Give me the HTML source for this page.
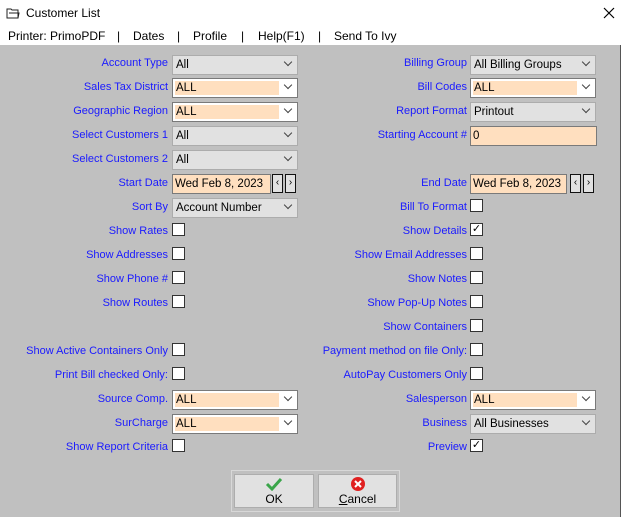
<!DOCTYPE html><html><head><style>
body{margin:0;width:625px;height:517px;overflow:hidden;background:#fff;font-family:"Liberation Sans",Arial,sans-serif;font-size:11px;position:relative}
.title{position:absolute;left:26px;top:6px;font-size:12px;color:#000}
.menu span{position:absolute;top:29px;font-size:12px}
.body{position:absolute;left:0;top:45px;width:620px;height:472px;background:#c0c0c0;border-right:1px solid #555}
.l{position:absolute;color:#1a1aff;text-align:right;width:300px;white-space:nowrap;margin-top:2px}
.c{position:absolute;width:126px;height:20px;box-sizing:border-box;border:1px solid #acacac;background:#e1e1e1;color:#000}
.c span{position:absolute;left:3px;top:3px;font-size:11.5px}
.c.e{background:#fff;border-color:#7a7a7a}
.c.e i{position:absolute;left:2px;top:2px;width:104px;height:14px;background:#ffdfbf}
.c b{position:absolute;right:6px;top:3px;width:5px;height:5px;border-right:1px solid #444;border-bottom:1px solid #444;transform:rotate(45deg)}
.t{position:absolute;width:99px;height:20px;box-sizing:border-box;border:1px solid #7a7a7a;background:#ffdfbf;color:#000;padding:3px 0 0 2px;font-size:11.5px;white-space:nowrap;overflow:hidden}
.ar{position:absolute;width:11px;height:19px;box-sizing:border-box;border:1px solid #111;background:#e1e1e1;font-size:10px;text-align:center;line-height:16px}
.k{position:absolute;width:13px;height:13px;box-sizing:border-box;border:1px solid #333;background:#fff;font-size:11px;line-height:11px;text-align:center}
.btn{position:absolute;top:474px;height:34px;width:80px;box-sizing:border-box;border:1px solid #adadad;background:#e1e1e1;text-align:center;font-size:12px}
</style></head><body>
<svg style="position:absolute;left:6px;top:7px" width="14" height="13"><path d="M1 2h4l1 1h6v8H1z" fill="none" stroke="#222"/><path d="M3 6h10l-1 5" fill="none" stroke="#222"/></svg>
<div class="title">Customer List</div>
<svg style="position:absolute;left:603px;top:7px" width="12" height="12"><path d="M1 1l10 10M11 1L1 11" stroke="#000" stroke-width="1.2"/></svg>
<div class="menu"><span style="left:8px">Printer: PrimoPDF</span><span style="left:117px">|</span><span style="left:133px">Dates</span><span style="left:177px">|</span><span style="left:193px">Profile</span><span style="left:241px">|</span><span style="left:258px">Help(F1)</span><span style="left:318px">|</span><span style="left:334px">Send To Ivy</span></div>
<div class="body"></div>

<div class="l" style="left:-132px;top:55px">Account Type</div><div class="c" style="left:172px;top:55px"><span>All</span><b></b></div>
<div class="l" style="left:-132px;top:79px">Sales Tax District</div><div class="c e" style="left:172px;top:78px"><i></i><span>ALL</span><b></b></div>
<div class="l" style="left:-132px;top:103px">Geographic Region</div><div class="c e" style="left:172px;top:102px"><i></i><span>ALL</span><b></b></div>
<div class="l" style="left:-132px;top:127px">Select Customers 1</div><div class="c" style="left:172px;top:126px"><span>All</span><b></b></div>
<div class="l" style="left:-132px;top:151px">Select Customers 2</div><div class="c" style="left:172px;top:150px"><span>All</span><b></b></div>
<div class="l" style="left:-132px;top:175px">Start Date</div><div class="t" style="left:172px;top:174px">Wed Feb 8, 2023</div><div class="ar" style="left:272px;top:174px">‹</div><div class="ar" style="left:285px;top:174px">›</div>
<div class="l" style="left:-132px;top:199px">Sort By</div><div class="c" style="left:172px;top:198px"><span>Account Number</span><b></b></div>
<div class="l" style="left:-132px;top:223px">Show Rates</div><div class="k" style="left:172px;top:223px"></div>
<div class="l" style="left:-132px;top:247px">Show Addresses</div><div class="k" style="left:172px;top:247px"></div>
<div class="l" style="left:-132px;top:271px">Show Phone #</div><div class="k" style="left:172px;top:271px"></div>
<div class="l" style="left:-132px;top:295px">Show Routes</div><div class="k" style="left:172px;top:295px"></div>
<div class="l" style="left:-132px;top:343px">Show Active Containers Only</div><div class="k" style="left:172px;top:343px"></div>
<div class="l" style="left:-132px;top:367px">Print Bill checked Only:</div><div class="k" style="left:172px;top:367px"></div>
<div class="l" style="left:-132px;top:391px">Source Comp.</div><div class="c e" style="left:172px;top:390px"><i></i><span>ALL</span><b></b></div>
<div class="l" style="left:-132px;top:415px">SurCharge</div><div class="c e" style="left:172px;top:414px"><i></i><span>ALL</span><b></b></div>
<div class="l" style="left:-132px;top:439px">Show Report Criteria</div><div class="k" style="left:172px;top:439px"></div>

<div class="l" style="left:167px;top:55px">Billing Group</div><div class="c" style="left:470px;top:55px"><span>All Billing Groups</span><b></b></div>
<div class="l" style="left:167px;top:79px">Bill Codes</div><div class="c e" style="left:470px;top:78px"><i></i><span>ALL</span><b></b></div>
<div class="l" style="left:167px;top:103px">Report Format</div><div class="c" style="left:470px;top:102px"><span>Printout</span><b></b></div>
<div class="l" style="left:167px;top:127px">Starting Account #</div><div class="t" style="left:470px;top:126px;width:127px">0</div>
<div class="l" style="left:167px;top:175px">End Date</div><div class="t" style="left:470px;top:174px;width:97px">Wed Feb 8, 2023</div><div class="ar" style="left:570px;top:174px">‹</div><div class="ar" style="left:583px;top:174px">›</div>
<div class="l" style="left:167px;top:199px">Bill To Format</div><div class="k" style="left:470px;top:199px"></div>
<div class="l" style="left:167px;top:223px">Show Details</div><div class="k" style="left:470px;top:223px">✓</div>
<div class="l" style="left:167px;top:247px">Show Email Addresses</div><div class="k" style="left:470px;top:247px"></div>
<div class="l" style="left:167px;top:271px">Show Notes</div><div class="k" style="left:470px;top:271px"></div>
<div class="l" style="left:167px;top:295px">Show Pop-Up Notes</div><div class="k" style="left:470px;top:295px"></div>
<div class="l" style="left:167px;top:319px">Show Containers</div><div class="k" style="left:470px;top:319px"></div>
<div class="l" style="left:167px;top:343px">Payment method on file Only:</div><div class="k" style="left:470px;top:343px"></div>
<div class="l" style="left:167px;top:367px">AutoPay Customers Only</div><div class="k" style="left:470px;top:367px"></div>
<div class="l" style="left:167px;top:391px">Salesperson</div><div class="c e" style="left:470px;top:390px"><i></i><span>ALL</span><b></b></div>
<div class="l" style="left:167px;top:415px">Business</div><div class="c" style="left:470px;top:414px"><span>All Businesses</span><b></b></div>
<div class="l" style="left:167px;top:439px">Preview</div><div class="k" style="left:470px;top:439px">✓</div>

<div style="position:absolute;left:231px;top:470px;width:169px;height:42px;border:1px solid #d8d8d8;box-sizing:border-box"></div>
<div class="btn" style="left:234px"><svg width="18" height="14" style="margin-top:2px"><path d="M2 7l5 5 9-10" fill="none" stroke="#3aa54a" stroke-width="3"/></svg><div style="margin-top:-2px">OK</div></div>
<div class="btn" style="left:318px;width:79px"><svg width="16" height="16" style="margin-top:1px"><circle cx="8" cy="8" r="7" fill="#e02020"/><path d="M5 5l6 6M11 5l-6 6" stroke="#fff" stroke-width="2"/></svg><div style="margin-top:-3px"><u>C</u>ancel</div></div>
</body></html>
